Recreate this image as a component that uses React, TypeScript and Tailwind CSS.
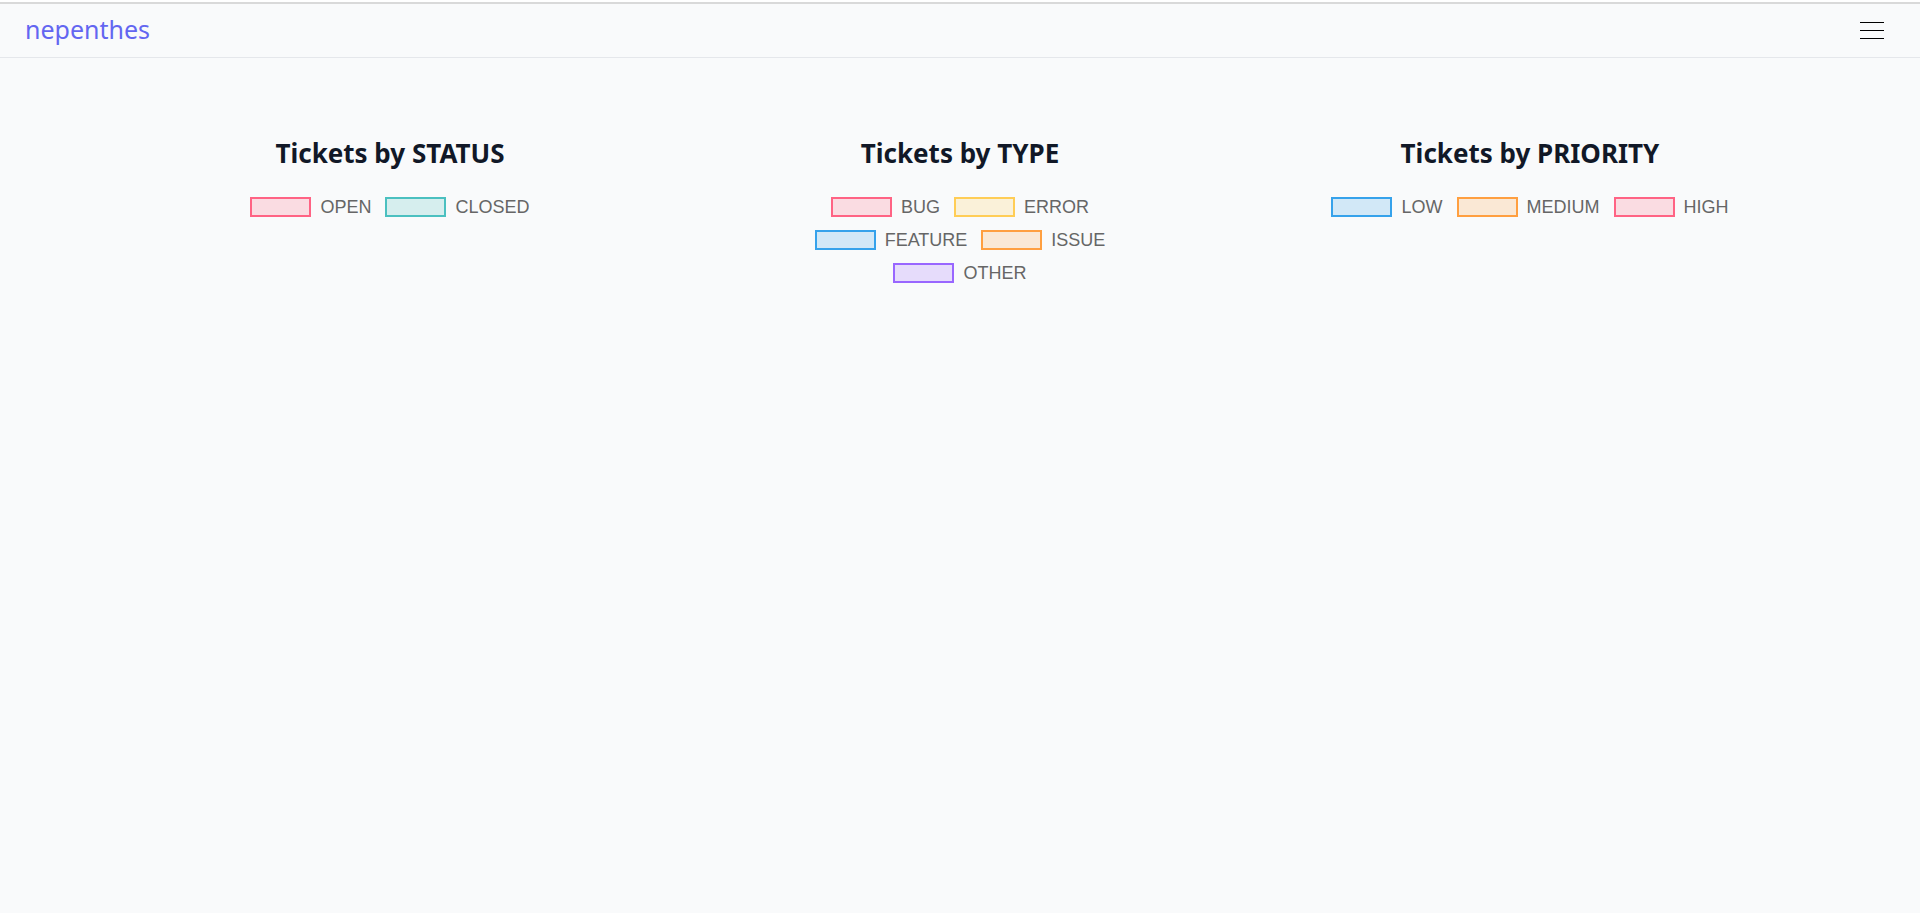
type LegendItem = { label: string; border: string; fill: string };

const pink = { border: "border-[rgb(255,99,132)]", fill: "bg-[rgba(255,99,132,0.2)]" };
const teal = { border: "border-[rgb(75,192,192)]", fill: "bg-[rgba(75,192,192,0.2)]" };
const yellow = { border: "border-[rgb(255,205,86)]", fill: "bg-[rgba(255,205,86,0.2)]" };
const blue = { border: "border-[rgb(54,162,235)]", fill: "bg-[rgba(54,162,235,0.2)]" };
const orange = { border: "border-[rgb(255,159,64)]", fill: "bg-[rgba(255,159,64,0.2)]" };
const purple = { border: "border-[rgb(153,102,255)]", fill: "bg-[rgba(153,102,255,0.2)]" };

const charts: { title: string; rows: LegendItem[][] }[] = [
  {
    title: "Tickets by STATUS",
    rows: [[{ label: "OPEN", ...pink }, { label: "CLOSED", ...teal }]],
  },
  {
    title: "Tickets by TYPE",
    rows: [
      [{ label: "BUG", ...pink }, { label: "ERROR", ...yellow }],
      [{ label: "FEATURE", ...blue }, { label: "ISSUE", ...orange }],
      [{ label: "OTHER", ...purple }],
    ],
  },
  {
    title: "Tickets by PRIORITY",
    rows: [[{ label: "LOW", ...blue }, { label: "MEDIUM", ...orange }, { label: "HIGH", ...pink }]],
  },
];

const Legend = ({ rows }: { rows: LegendItem[][] }) => {
  return (
    <div className="flex flex-col gap-[13px] font-['Liberation_Sans',Arial,sans-serif] text-[18px] leading-[20px] text-[#666]">
      {rows.map((row, i) => (
        <div key={i} className="flex justify-center gap-[14px]">
          {row.map((item) => (
            <div key={item.label} className="flex items-center gap-[9px]">
              <span className={`block w-[61px] h-[20px] border-2 ${item.border} ${item.fill}`} />
              <span>{item.label}</span>
            </div>
          ))}
        </div>
      ))}
    </div>
  );
};

const App = () => {
  return (
    <div className="min-h-screen bg-[#f9fafb] font-['Noto_Sans',sans-serif]">
      <div className="h-[2px] bg-white" />
      <div className="h-[2px] bg-[#d9d9d9]" />

      <nav className="h-[54px] flex items-center justify-between pl-[25px] pr-[36px] border-b border-[#e5e7eb]">
        <span className="text-[25px] leading-none text-[#6366f1] -mt-[3px]">nepenthes</span>
        {/* hamburger */}
        <button className="self-start mt-[18px] flex flex-col gap-[7px] w-[24px]">
          <span className="block h-px bg-black" />
          <span className="block h-px bg-black" />
          <span className="block h-px bg-black" />
        </button>
      </nav>

      <main className="w-[1710px] mx-auto grid grid-cols-3 pt-[77px]">
        {charts.map((chart) => (
          <section key={chart.title} className="flex flex-col items-center">
            <h2 className="text-[26px] leading-[36px] font-bold text-[#111827]">{chart.title}</h2>
            <div className="mt-[26px]">
              <Legend rows={chart.rows} />
            </div>
          </section>
        ))}
      </main>
    </div>
  );
};

export default App;
